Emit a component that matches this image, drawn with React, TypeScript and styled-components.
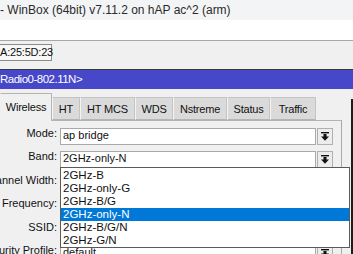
import React from "react";
import styled, { createGlobalStyle } from "styled-components";

const GlobalStyle = createGlobalStyle`
  html, body {
    margin: 0;
    padding: 0;
    background: #f0f0f0;
  }
  body {
    font-family: "Liberation Sans", Arial, sans-serif;
  }
`;

const tabs = [
  { name: "Wireless", width: 52 },
  { name: "HT", width: 28 },
  { name: "HT MCS", width: 55 },
  { name: "WDS", width: 38 },
  { name: "Nstreme", width: 54 },
  { name: "Status", width: 43 },
  { name: "Traffic", width: 46 },
];

const bands = [
  "2GHz-B",
  "2GHz-only-G",
  "2GHz-B/G",
  "2GHz-only-N",
  "2GHz-B/G/N",
  "2GHz-G/N",
];

const DropArrow: React.FC = () => (
  <svg width="8" height="9" viewBox="0 0 8 9">
    <rect x="0" y="0" width="8" height="1.4" fill="#111" />
    <rect x="2.5" y="2" width="3" height="3" fill="#111" />
    <polygon points="0,4.5 8,4.5 4,8.8" fill="#111" />
  </svg>
);

export default function App(): JSX.Element {
  return (
    <>
      <GlobalStyle />
      <Screen>
        <TitleBar>- WinBox (64bit) v7.11.2 on hAP ac^2 (arm)</TitleBar>
        <BlankStrip />
        <Toolbar>
          <MacBox>A:25:5D:23</MacBox>
        </Toolbar>
        <WindowHeader>Radio0-802.11N&gt;</WindowHeader>
        <Body>
          <Main>
            <TabRow>
              {tabs.map((t, i) => (
                <Tab key={t.name} $width={t.width} $active={i === 0}>
                  {t.name}
                </Tab>
              ))}
            </TabRow>
            <Panel>
              <FormRow>
                <Label>Mode:</Label>
                <Field>
                  <Input>ap bridge</Input>
                </Field>
                <DropButton>
                  <DropArrow />
                </DropButton>
              </FormRow>
              <FormRow>
                <Label>Band:</Label>
                <Field>
                  <Input>2GHz-only-N</Input>
                  <ListBox>
                    {bands.map((b) => (
                      <ListItem key={b} $selected={b === "2GHz-only-N"}>
                        {b}
                      </ListItem>
                    ))}
                  </ListBox>
                </Field>
                <DropButton>
                  <DropArrow />
                </DropButton>
              </FormRow>
              <FormRow>
                <Label>Channel Width:</Label>
                <Field>
                  <Input />
                </Field>
                <DropButton>
                  <DropArrow />
                </DropButton>
              </FormRow>
              <FormRow>
                <Label>Frequency:</Label>
                <Field>
                  <Input />
                </Field>
                <DropButton>
                  <DropArrow />
                </DropButton>
              </FormRow>
              <FormRow>
                <Label>SSID:</Label>
                <Field>
                  <Input />
                </Field>
                <DropButton>
                  <DropArrow />
                </DropButton>
              </FormRow>
              <FormRow>
                <Label>Security Profile:</Label>
                <Field>
                  <Input>default</Input>
                </Field>
                <DropButton>
                  <DropArrow />
                </DropButton>
              </FormRow>
            </Panel>
          </Main>
          <EdgeLine />
        </Body>
      </Screen>
    </>
  );
}

const Screen = styled.div`
  width: 353px;
  height: 254px;
  overflow: hidden;
  background: #f0f0f0;
`;

const TitleBar = styled.div`
  height: 20px;
  line-height: 20px;
  background: #f3f4f5;
  color: #2a2a2a;
  font-size: 12px;
  white-space: nowrap;
`;

const BlankStrip = styled.div`
  height: 20px;
  background: #ffffff;
  border-bottom: 1px solid #a8a8a8;
`;

const Toolbar = styled.div`
  height: 29px;
  padding-top: 3px;
  box-sizing: border-box;
  border-bottom: 1px solid #3a3a3a;
`;

const MacBox = styled.div`
  width: 54px;
  height: 17px;
  margin-left: -2px;
  box-sizing: border-box;
  border: 1px solid #8c8c8c;
  background: #f7f7f7;
  font-size: 11px;
  line-height: 15px;
  color: #111;
  padding-left: 1px;
  letter-spacing: -0.2px;
  white-space: nowrap;
`;

const WindowHeader = styled.div`
  height: 19px;
  line-height: 19px;
  background: #4747c9;
  color: #ffffff;
  font-size: 11.5px;
  letter-spacing: -0.5px;
  white-space: nowrap;
`;

const Body = styled.div`
  height: 170px;
  display: flex;
  position: relative;
`;

const Main = styled.div`
  width: 351px;
  display: flex;
  flex-direction: column;
  padding-top: 4px;
  box-sizing: border-box;
`;

const EdgeLine = styled.div`
  width: 2px;
  margin-top: 10px;
  background: #1c1c1c;
`;

const TabRow = styled.div`
  display: flex;
  align-items: flex-end;
  height: 27px;
  flex-shrink: 0;
  position: relative;
  z-index: 1;
`;

const Tab = styled.div<{ $width: number; $active: boolean }>`
  width: ${(p) => p.$width}px;
  height: ${(p) => (p.$active ? 28 : 23)}px;
  margin-bottom: ${(p) => (p.$active ? -1 : 0)}px;
  box-sizing: border-box;
  display: flex;
  align-items: center;
  justify-content: center;
  font-size: 11px;
  letter-spacing: -0.2px;
  color: #111;
  background: ${(p) => (p.$active ? "#f0f0f0" : "#dadada")};
  border: 1px solid ${(p) => (p.$active ? "#b4b4b4" : "#c4c4c4")};
  border-bottom: ${(p) => (p.$active ? "none" : "1px solid #b4b4b4")};
  border-left-color: ${(p) => (p.$active ? "#f0f0f0" : "#f4f4f4")};
  padding-bottom: ${(p) => (p.$active ? 2 : 0)}px;
  white-space: nowrap;
`;

const Panel = styled.div`
  width: 342px;
  flex: 1;
  box-sizing: border-box;
  border-top: 1px solid #b4b4b4;
  border-right: 1px solid #a8a8a8;
  padding-top: 7px;
  display: flex;
  flex-direction: column;
  gap: 6.4px;
`;

const FormRow = styled.div`
  display: grid;
  grid-template-columns: 57px 256px 16px;
  column-gap: 3px;
  height: 17px;
  flex-shrink: 0;
  & > :nth-child(3) {
    margin-left: -2px;
  }
`;

const Label = styled.div`
  display: flex;
  justify-content: flex-end;
  align-items: flex-start;
  margin-top: -1px;
  line-height: 13px;
  font-size: 11px;
  color: #111;
  white-space: nowrap;
`;

const Field = styled.div`
  position: relative;
`;

const Input = styled.div`
  height: 17px;
  box-sizing: border-box;
  border: 1px solid #a9a9a9;
  background: #ffffff;
  font-size: 11px;
  line-height: 13px;
  padding-left: 2px;
  color: #111;
  white-space: nowrap;
`;

const DropButton = styled.div`
  width: 16px;
  height: 17px;
  box-sizing: border-box;
  border: 1px solid #b0b0b0;
  background: #ececec;
  display: flex;
  align-items: center;
  justify-content: center;
`;

const ListBox = styled.div`
  position: absolute;
  top: 16px;
  left: 0;
  width: 290px;
  box-sizing: border-box;
  border: 1px solid #5a5a5a;
  background: #ffffff;
  z-index: 5;
  padding: 1px 0 0;
`;

const ListItem = styled.div<{ $selected: boolean }>`
  height: 13px;
  line-height: 13px;
  font-size: 11.5px;
  padding-left: 2px;
  white-space: nowrap;
  color: ${(p) => (p.$selected ? "#ffffff" : "#111")};
  background: ${(p) => (p.$selected ? "#0078d7" : "transparent")};
`;
